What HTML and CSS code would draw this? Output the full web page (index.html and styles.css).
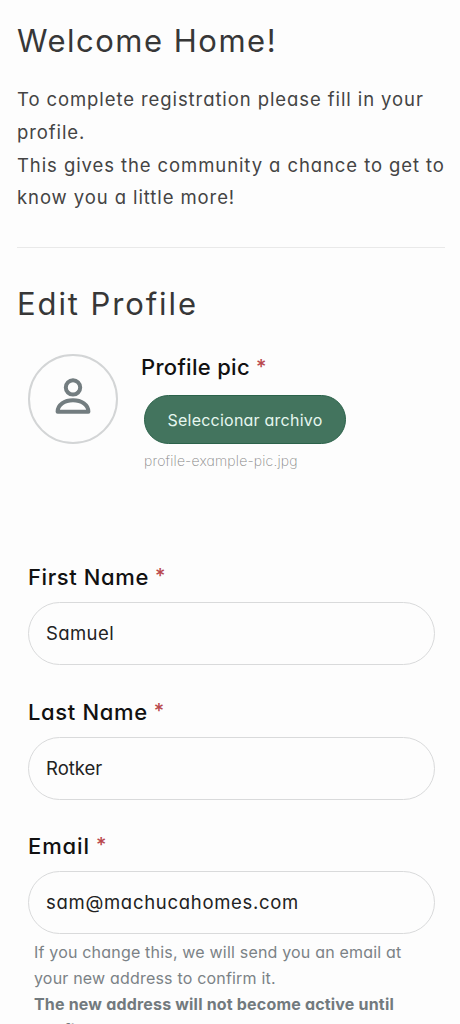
FILE: index.html
```html
<!DOCTYPE html>
<html lang="en">
<head>
<meta charset="utf-8">
<meta name="viewport" content="width=device-width, initial-scale=1">
<title>Edit Profile</title>
<link rel="stylesheet" href="styles.css">
</head>
<body>
<main class="page">
  <header class="intro">
    <h1 class="title"><span class="t-welcome">Welcome Home!</span></h1>
    <p class="lead">
      To complete registration please fill in your<br>
      profile.<br>
      This gives the community a chance to get to<br>
      know you a little more!
    </p>
  </header>
  <h2 class="title"><span class="t-edit">Edit Profile</span></h2>
  <form class="form">
    <section class="picture">
      <div class="avatar">
        <svg width="36" height="37" viewBox="0 0 36 37" fill="none" stroke="#737d80" stroke-width="4" stroke-linejoin="round">
          <circle cx="18" cy="9.4" r="7.2"/>
          <path d="M2.6 33.8C2.6 26.6 9.5 22.2 18 22.2S33.4 26.6 33.4 33.8Z"/>
        </svg>
      </div>
      <div class="picture-body">
        <div class="label label-pic"><span class="n-pic">Profile pic</span><span class="req">*</span></div>
        <button class="upload" type="button">Seleccionar archivo</button>
        <div class="filename">profile-example-pic.jpg</div>
      </div>
    </section>
    <div class="field">
      <div class="label"><span class="n-first">First Name</span><span class="req">*</span></div>
      <div class="input"><span class="v-first">Samuel</span></div>
    </div>
    <div class="field">
      <div class="label"><span class="n-last">Last Name</span><span class="req">*</span></div>
      <div class="input"><span class="v-last">Rotker</span></div>
    </div>
    <div class="field">
      <div class="label"><span class="n-email">Email</span><span class="req">*</span></div>
      <div class="input"><span class="v-email">sam@machucahomes.com</span></div>
      <p class="hint">
        If you change this, we will send you an email at<br>
        your new address to confirm it.<br>
        <strong>The new address will not become active until<br>
        confirmed.</strong>
      </p>
    </div>
  </form>
</main>
</body>
</html>
```
FILE: styles.css
```css
* { box-sizing: border-box; }
html, body { height: 100%; }
body {
  margin: 0;
  background: #fdfdfd;
  overflow: hidden;
  font-family: Inter, "Open Sans", sans-serif;
  font-feature-settings: "cv11", "calt" 0;
}
.page { height: 1024px; overflow: hidden; padding: 20px 15px 0 17px; }
.intro { border-bottom: 1px solid #e9e9e9; height: 228px; margin-bottom: 35px; }
.title {
  margin: 0;
  font-size: 31px;
  line-height: 41px;
  height: 40px;
  font-weight: 400;
  color: #373737;
  white-space: nowrap;
}
.t-welcome { letter-spacing: 1.5px; }
.t-edit { letter-spacing: 1.9px; }
.lead {
  margin: 23px 0 0;
  font-size: 18.5px;
  line-height: 32.8px;
  letter-spacing: 0.91px;
  color: #444;
  white-space: nowrap;
}
.form { padding: 0 9px 0 11px; }
.picture { display: flex; gap: 23px; height: 240px; padding-top: 31px; }
.avatar {
  flex: none;
  display: flex;
  align-items: center;
  justify-content: center;
  width: 90px;
  height: 90px;
  border: 2px solid #d3d5d6;
  border-radius: 50%;
  padding-bottom: 5px;
}
.label {
  display: flex;
  gap: 6px;
  height: 30px;
  font-size: 22px;
  line-height: 28px;
  font-weight: 500;
  color: #111;
  white-space: nowrap;
}
.label-pic { line-height: 27px; }
.n-pic { letter-spacing: 0.3px; }
.n-first { letter-spacing: 0.6px; }
.n-last { letter-spacing: 0.65px; }
.n-email { letter-spacing: 0.9px; }
.req { color: #b9474c; font-size: 20px; line-height: 26px; }
.upload {
  display: block;
  margin: 11px 0 0 3px;
  width: 202px;
  height: 49px;
  padding: 0;
  border: 1px solid #2b624a;
  border-radius: 25px;
  background: #43745e;
  color: #e6f7ef;
  font: inherit;
  font-feature-settings: inherit;
  font-size: 16px;
  letter-spacing: 0.23px;
}
.filename {
  margin: 6px 0 0 3px;
  font-size: 14px;
  line-height: 22px;
  font-weight: 200;
  letter-spacing: 0.18px;
  color: #888;
}
.field { height: 134.6px; padding-right: 1px; }
.input {
  display: flex;
  align-items: center;
  height: 63px;
  margin-top: 9px;
  padding: 0 0 1px 17px;
  border: 1px solid #d9dadb;
  border-radius: 32px;
  font-size: 18.5px;
  color: #222;
}
.v-first { letter-spacing: 0.4px; }
.v-email { letter-spacing: 0.7px; }
.hint {
  margin: 6px 0 0 6px;
  font-size: 16px;
  line-height: 25.8px;
  letter-spacing: 0.19px;
  color: #7b8286;
  white-space: nowrap;
}
.hint strong { font-weight: 700; color: #727a7e; }
```
